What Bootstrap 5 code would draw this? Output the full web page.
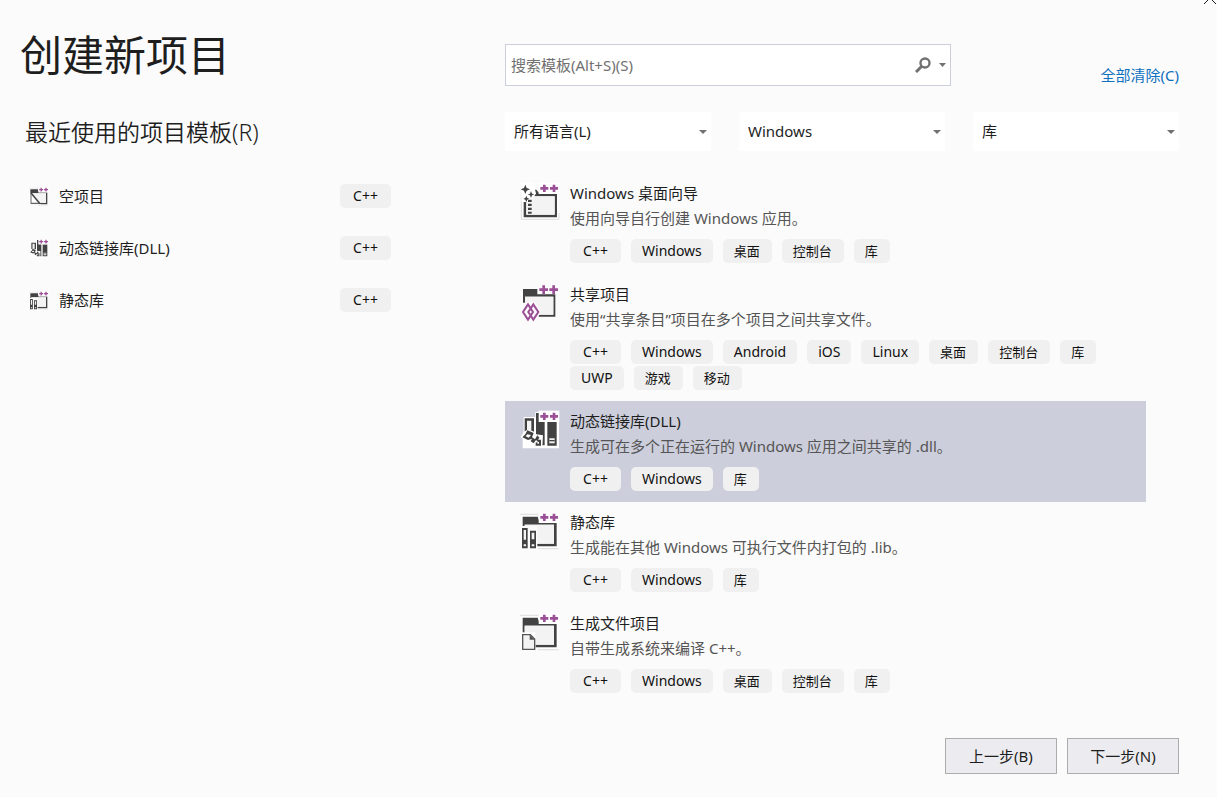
<!DOCTYPE html>
<html lang="zh-CN">
<head>
<meta charset="utf-8">
<meta name="viewport" content="width=device-width, initial-scale=1">
<title>创建新项目</title>
<link href="https://cdn.jsdelivr.net/npm/bootstrap@5.3.0/dist/css/bootstrap.min.css" rel="stylesheet">
<style>
  body { background: #fbfbfb; color: #1e1e1e; font: 15px/24px "Noto Sans", "Noto Sans CJK SC", sans-serif; }
  .page { padding: 20px 38px 23px 20px; }
  .columns { display: grid; grid-template-columns: 371fr 674fr; column-gap: 114px; }
  .page-title { font-size: 42px; line-height: 70px; font-weight: 400; }
  .recent-title { font-size: 23px; line-height: 36px; font-weight: 350; margin: 24px 0 20px 5px; }
  .recent-list .list-group-item { padding: 14px 0 14px 9px; gap: 10px; }
  .list-group-item, .list-group-item:hover, .list-group-item:focus { background: transparent; border: 0; color: #1e1e1e; }
  .tag { background: #f0f0f0; color: #111; border-radius: 5px; height: 24px; min-width: 51px; text-align: center; padding: 0 11px; font-size: 14px; line-height: 24px; }
  .tag:lang(zh) { font-size: 13px; padding-right: 12px; min-width: 0; }
  .tag.tag-short { min-width: 0; }
  .tag-row { gap: 2px 10px; margin-top: 8px; }
  .search-row { padding-top: 24px; }
  .search-box { flex: 0 0 66.2%; height: 42px; border: 1px solid #cccedb; background: #fff; padding: 0 4px 0 5px; }
  .search-box input { background: none; border: 0; padding: 0; outline: 0; color: #1e1e1e; }
  .search-box input::placeholder { color: #717171; opacity: 1; }
  .bare-btn { background: none; border: 0; padding: 0; line-height: 0; }
  .clear-link { color: #0e70c0; text-decoration: none; padding-top: 20px; line-height: 22px; }
  .filters { display: grid; grid-template-columns: repeat(3, 1fr); column-gap: 28px; margin: 26px 0 22px; }
  .filters select { display: block; appearance: none; height: 39px; width: 100%; border: 0; border-radius: 0; padding: 0 20px 1px 9px; color: #1e1e1e;
    background: #fff url("data:image/svg+xml,%3Csvg xmlns='http://www.w3.org/2000/svg' width='8' height='4'%3E%3Cpath d='M0 0h8L4 4z' fill='%23717171'/%3E%3C/svg%3E") no-repeat right 4px center; }
  .template-list { margin-right: 33px; }
  .template-list .list-group-item { padding: 8px 0 11px 15px; gap: 10px; line-height: 25px; }
  .template-list .list-group-item.selected { background: #cccedb; }
  .template-desc { color: #555; }
  .step-bar { gap: 10px; }
  .step-btn { width: 112px; height: 36px; background: #ececf0; border: 1px solid #acacac; color: #1e1e1e; padding: 0; }
  .close-btn { top: 0; right: 1px; }
</style>
</head>
<body>
<svg class="d-none" aria-hidden="true">
  <symbol id="pluses" viewBox="0 0 120 120">
    <path d="M56 5h62v34H56z" fill="#fff"/>
    <path d="M69 11h8v7h8v8h-8v7h-8v-7h-8v-8h8zM98 11h8v7h8v8h-8v7h-8v-7h-8v-8h8z" fill="#9b4f96"/>
  </symbol>
  <symbol id="folder" viewBox="0 0 120 120">
    <path d="M0 13h56M54 116h62" stroke="#cfcfd2" stroke-width="2"/>
    <path d="M7 18h52v18h54v77H7z" fill="#fff"/>
    <path fill-rule="evenodd" d="M8 20h45l6 17h51v72H8zM14 44v57h88V44z" fill="#424242"/>
    <path d="M14 44h88v57H14z" fill="#f3f3f3"/>
    <use href="#pluses"/>
  </symbol>
  <symbol id="i-wizard" viewBox="0 0 120 120">
    <path d="M4 8v107h113V96" fill="none" stroke="#cfcfd2" stroke-width="2"/>
    <path d="M8 36h106v76H8z" fill="#fff"/>
    <path d="M11 63h8v38h85V46H43L34 26h15l10 12h52v71H11z" fill="#424242"/>
    <path d="M19 46h85v55H19z" fill="#f3f3f3"/>
    <path d="M1 5h38l9 32-15 26H5z" fill="#fff"/>
    <path d="M16 11l4 10 10 4-10 4-4 10-4-10-10-4 10-4zM33 30l3 8 7 2-7 3-3 8-3-8-7-3 7-2zM19 44l3 7 6 2-6 3-3 7-3-7-6-3 6-2z" fill="#424242"/>
    <path d="M24 56h11v7H24zM24 68h11v7H24zM24 80h11v7H24zM24 92h11v6H24z" fill="#424242"/>
    <use href="#pluses"/>
  </symbol>
  <symbol id="i-shared" viewBox="0 0 120 120">
    <path d="M9 21h43v16h54v67H56v-6h44V44H15v18H9z" fill="#424242"/>
    <path d="M15 44h85v54H15z" fill="#f3f3f3"/>
    <path d="M20 59h24l17 26v9l-17 25H20L3 94v-9z" fill="#fbfbfb"/>
    <path d="M24 67L9 90l15 23 15-23zM40 67L25 90l15 23 15-23z" fill="none" stroke="#9b4f96" stroke-width="6"/>
    <path d="M57 7h60v29H57z" fill="#fbfbfb"/>
    <path d="M67 10h8v9h9v8h-9v9h-8v-9h-9v-8h9zM97 10h8v9h9v8h-9v9h-8v-9h-9v-8h9z" fill="#9b4f96"/>
  </symbol>
  <symbol id="i-dll" viewBox="0 0 120 120">
    <path d="M11 24h35V9h71v109H8V88l-6-5 9-13z" fill="#fff"/>
    <path d="M14 28h28v60H14zM48 12h26v97H48zM82 38h28v72H82z" fill="#424242"/>
    <path d="M21 35h13v28H21zM88 88h16v15H88z" fill="#f3f3f3"/>
    <path d="M88 93h16v4H88z" fill="#424242"/>
    <path d="M26 61l16 7 7 8 20 3-2 35H45l-13-14L3 86l8-18z" fill="#fff"/>
    <path d="M22 64l19 8-5 13 9 6 7-12 6 7-4 6h9v18H47v-9l7-3-6-5-7 10-9-6 4-8-12 4-17-8 9-9z" fill="#424242"/>
    <path d="M22 76l11 2-7 8-9-4zM52 99h5v5h-5z" fill="#fff"/>
    <use href="#pluses"/>
  </symbol>
  <symbol id="i-static" viewBox="0 0 120 120">
    <use href="#folder"/>
    <path d="M2 48h50v70H2z" fill="#fbfbfb"/>
    <path d="M6 54h17v61H6zM30 62h18v53H30z" fill="#424242"/>
    <path d="M11 60h7v29h-7zM11 103h7v6h-7zM35 68h8v20h-8zM35 103h8v6h-8z" fill="#f3f3f3"/>
  </symbol>
  <symbol id="i-make" viewBox="0 0 120 120">
    <use href="#folder"/>
    <path d="M2 64h45v54H2z" fill="#fff"/>
    <path d="M8 71h23l13 13v31H8z" fill="#f3f3f3" stroke="#555" stroke-width="4"/>
    <path d="M29 71v15h15z" fill="#555"/>
  </symbol>
  <symbol id="i-empty" viewBox="0 0 120 120">
    <use href="#folder"/>
    <path d="M1 38l72 74H1z" fill="#fff"/>
    <path d="M9 43v65h55l-6-7H15V56z" fill="#666"/>
    <path d="M12 42l54 65" stroke="#424242" stroke-width="9"/>
  </symbol>
</svg>

<button type="button" class="bare-btn close-btn position-absolute" aria-label="关闭">
  <svg width="13" height="4" viewBox="0 0 13 4"><path d="M1 4L7-2l6 6" fill="none" stroke="#1e1e1e"/></svg>
</button>

<div class="page container-fluid min-vh-100 d-flex flex-column">
  <main class="columns">
    <section>
      <h1 class="page-title mb-0">创建新项目</h1>
      <h2 class="recent-title">最近使用的项目模板(R)</h2>
      <div class="recent-list list-group list-group-flush">
        <button type="button" class="list-group-item list-group-item-action d-flex align-items-center">
          <svg width="20" height="20"><use href="#i-empty"/></svg><span class="flex-grow-1">空项目</span><span class="tag" lang="en">C++</span>
        </button>
        <button type="button" class="list-group-item list-group-item-action d-flex align-items-center">
          <svg width="20" height="20"><use href="#i-dll"/></svg><span class="flex-grow-1">动态链接库(DLL)</span><span class="tag" lang="en">C++</span>
        </button>
        <button type="button" class="list-group-item list-group-item-action d-flex align-items-center">
          <svg width="20" height="20"><use href="#i-static"/></svg><span class="flex-grow-1">静态库</span><span class="tag" lang="en">C++</span>
        </button>
      </div>
    </section>

    <section>
      <div class="search-row d-flex justify-content-between">
        <div class="search-box d-flex align-items-center">
          <input type="text" class="flex-grow-1" placeholder="搜索模板(Alt+S)(S)" aria-label="搜索模板">
          <button type="button" class="bare-btn" aria-label="搜索">
            <svg width="16" height="16" viewBox="0 0 16 16" fill="none" stroke="#717171"><circle cx="10" cy="6" r="4.500" stroke-width="2.400"/><path d="M6.500 9.500L1 15" stroke-width="3"/></svg>
          </button>
          <button type="button" class="bare-btn ms-2" aria-label="搜索选项">
            <svg width="7" height="4" viewBox="0 0 7 4"><path d="M0 0h7L3.500 4z" fill="#717171"/></svg>
          </button>
        </div>
        <a href="#" class="clear-link">全部清除(C)</a>
      </div>
      <div class="filters">
        <select aria-label="语言"><option>所有语言(L)</option></select>
        <select aria-label="平台"><option>Windows</option></select>
        <select aria-label="项目类型"><option>库</option></select>
      </div>

      <div class="template-list list-group list-group-flush">
        <button type="button" class="list-group-item list-group-item-action d-flex">
          <svg class="flex-shrink-0" width="40" height="40"><use href="#i-wizard"/></svg>
          <span>
            <span class="d-block">Windows 桌面向导</span>
            <span class="template-desc d-block">使用向导自行创建 Windows 应用。</span>
            <span class="tag-row d-flex flex-wrap"><span class="tag" lang="en">C++</span><span class="tag" lang="en">Windows</span><span class="tag">桌面</span><span class="tag">控制台</span><span class="tag">库</span></span>
          </span>
        </button>
        <button type="button" class="list-group-item list-group-item-action d-flex">
          <svg class="flex-shrink-0" width="40" height="40"><use href="#i-shared"/></svg>
          <span>
            <span class="d-block">共享项目</span>
            <span class="template-desc d-block">使用<span lang="en">“</span>共享条目<span lang="en">”</span>项目在多个项目之间共享文件。</span>
            <span class="tag-row d-flex flex-wrap"><span class="tag" lang="en">C++</span><span class="tag" lang="en">Windows</span><span class="tag" lang="en">Android</span><span class="tag tag-short" lang="en">iOS</span><span class="tag" lang="en">Linux</span><span class="tag">桌面</span><span class="tag">控制台</span><span class="tag">库</span><span class="tag" lang="en">UWP</span><span class="tag">游戏</span><span class="tag">移动</span></span>
          </span>
        </button>
        <button type="button" class="list-group-item list-group-item-action d-flex selected" aria-current="true">
          <svg class="flex-shrink-0" width="40" height="40"><use href="#i-dll"/></svg>
          <span>
            <span class="d-block">动态链接库(DLL)</span>
            <span class="template-desc d-block">生成可在多个正在运行的 Windows 应用之间共享的 .dll。</span>
            <span class="tag-row d-flex flex-wrap"><span class="tag" lang="en">C++</span><span class="tag" lang="en">Windows</span><span class="tag">库</span></span>
          </span>
        </button>
        <button type="button" class="list-group-item list-group-item-action d-flex">
          <svg class="flex-shrink-0" width="40" height="40"><use href="#i-static"/></svg>
          <span>
            <span class="d-block">静态库</span>
            <span class="template-desc d-block">生成能在其他 Windows 可执行文件内打包的 .lib。</span>
            <span class="tag-row d-flex flex-wrap"><span class="tag" lang="en">C++</span><span class="tag" lang="en">Windows</span><span class="tag">库</span></span>
          </span>
        </button>
        <button type="button" class="list-group-item list-group-item-action d-flex">
          <svg class="flex-shrink-0" width="40" height="40"><use href="#i-make"/></svg>
          <span>
            <span class="d-block">生成文件项目</span>
            <span class="template-desc d-block">自带生成系统来编译 C++。</span>
            <span class="tag-row d-flex flex-wrap"><span class="tag" lang="en">C++</span><span class="tag" lang="en">Windows</span><span class="tag">桌面</span><span class="tag">控制台</span><span class="tag">库</span></span>
          </span>
        </button>
      </div>
    </section>
  </main>

  <footer class="step-bar d-flex justify-content-end mt-auto">
    <button type="button" class="step-btn">上一步(B)</button>
    <button type="button" class="step-btn">下一步(N)</button>
  </footer>
</div>
<script src="https://cdn.jsdelivr.net/npm/bootstrap@5.3.0/dist/js/bootstrap.bundle.min.js"></script>
</body>
</html>
